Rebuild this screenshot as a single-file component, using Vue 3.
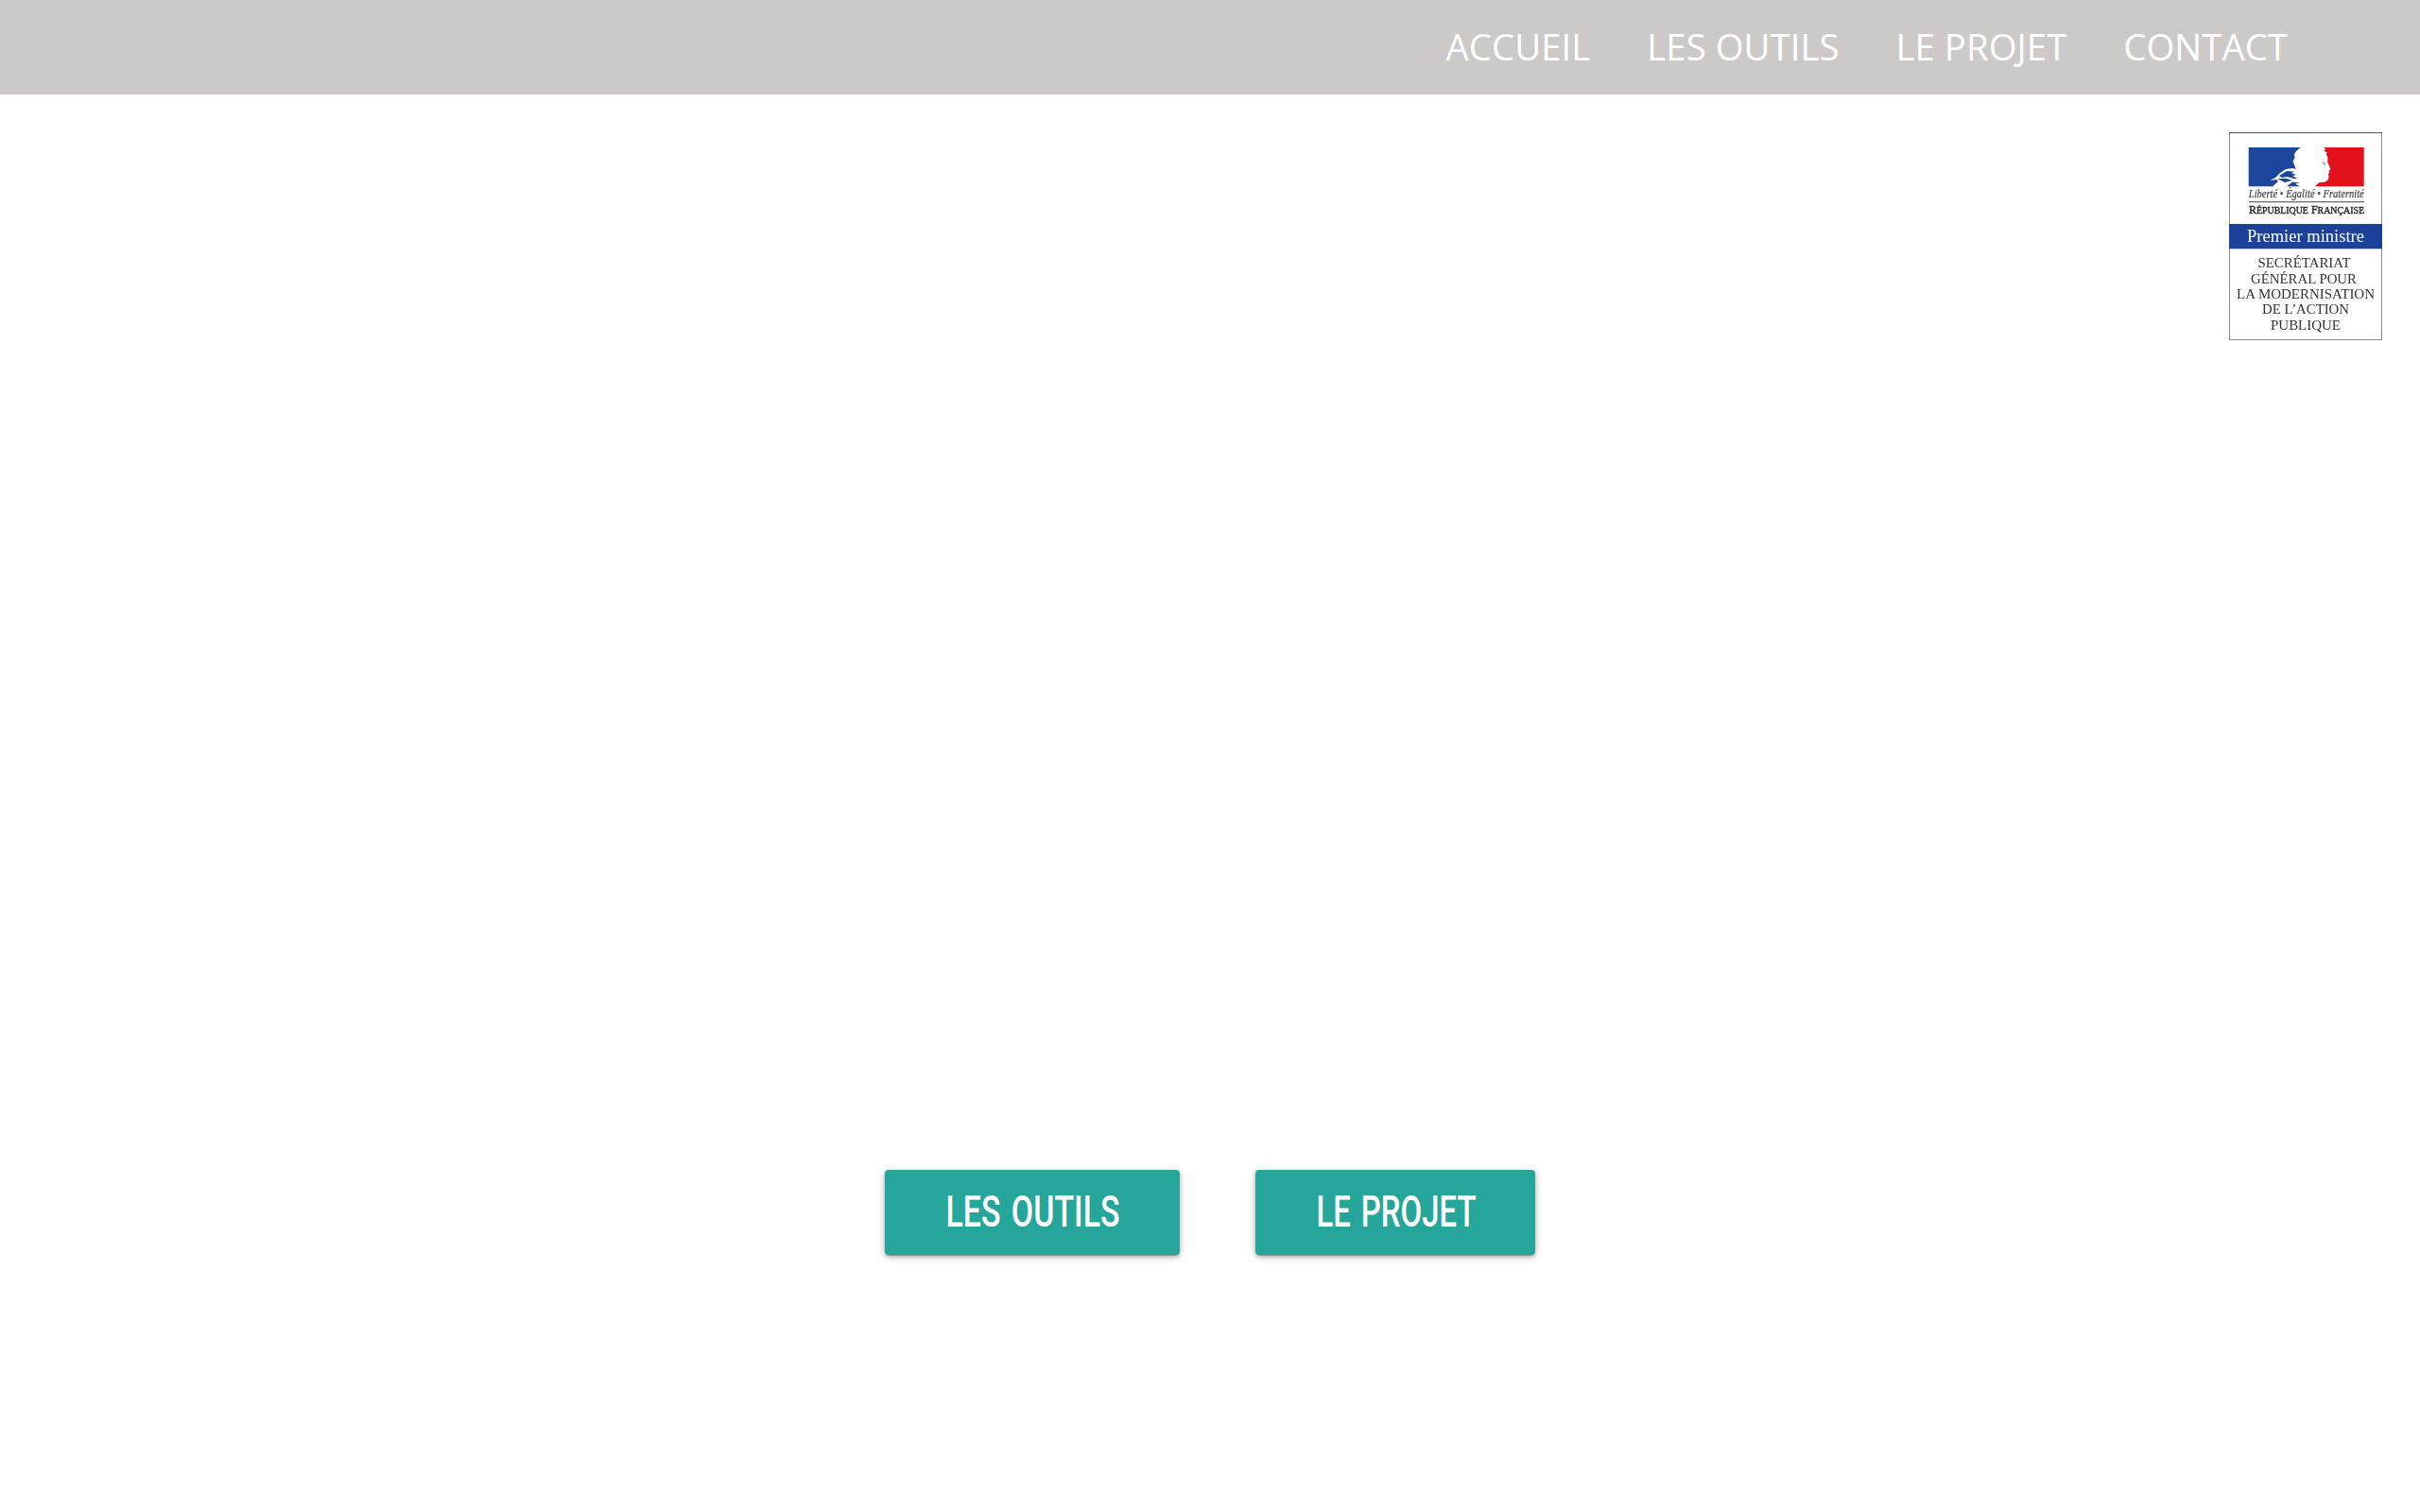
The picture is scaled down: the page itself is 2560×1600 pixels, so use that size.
<script setup>
const links = ['ACCUEIL', 'LES OUTILS', 'LE PROJET', 'CONTACT']

const buttons = [
  { text: 'LES OUTILS', width: 312, length: 184 },
  { text: 'LE PROJET', width: 296, length: 169 }
]

const department = [
  { text: 'SECRÉTARIAT', x: 79.5, y: 143.3, length: 98 },
  { text: 'GÉNÉRAL POUR', x: 79, y: 159.6, length: 112 },
  { text: 'LA MODERNISATION', x: 81, y: 175.8, length: 146 },
  { text: 'DE L’ACTION', x: 81, y: 192, length: 92 },
  { text: 'PUBLIQUE', x: 81, y: 209, length: 74 }
]
</script>

<template>
  <div class="page">
    <nav class="bar">
      <a v-for="link in links" :key="link" class="link">{{ link }}</a>
    </nav>
    <header class="brand">
      <svg class="logo" width="162" height="220" viewBox="0 0 162 220">
        <rect x="0.5" y="0.5" width="161" height="219" fill="#fff" stroke="#8b8b8b" />
        <path d="M0 .5H162" stroke="#555" />
        <g class="soft">
          <path fill="#1b469b" d="M20.7 16H75.5L71 20 69 23 69.5 27 67.5 31 69 34 70.5 39 67 38 60 39 54 43 49 48 43 51 50 50 52 52 46 57.3H20.7Z" />
          <path fill="#1b469b" d="M53 46 61 41 69 41.5 66 43 71 45 67 46 72 49 68 49 62 47 56 48ZM51 49 61 49 67 51 59 53ZM61 57.3 67 52.5 75 53.5 70 54.5 75 57.3Z" />
          <path fill="#e2111b" d="M100.5 16H142.7V57.3H91L95 53.3 102 52.5 105 50 105.5 46.5 104.8 44.5 106 42.5 105.5 41 107.5 39 104.2 31.5 104.5 27 102.8 23 103.5 21 100.5 20 102 18Z" />
          <path d="M98.5 33Q101 31.5 102 33M100 35.5 102 33.5" stroke="#777" stroke-width="1" fill="none" />
          <text class="motto" x="20.8" y="69.2" textLength="122" lengthAdjust="spacingAndGlyphs">Liberté • Égalité • Fraternité</text>
          <path d="M21 73.7H143" stroke="#666" stroke-width="1.2" />
          <text class="republic" x="21" y="86.3" textLength="122" lengthAdjust="spacingAndGlyphs">R<tspan class="small">ÉPUBLIQUE</tspan> F<tspan class="small">RANÇAISE</tspan></text>
        </g>
        <rect y="97" width="162" height="26.3" fill="#1b4298" />
        <g class="soft">
          <text class="minister" x="81" y="116.3" textLength="124" lengthAdjust="spacingAndGlyphs">Premier ministre</text>
          <text v-for="line in department" :key="line.text" class="department" :x="line.x" :y="line.y" :textLength="line.length" lengthAdjust="spacingAndGlyphs">{{ line.text }}</text>
        </g>
      </svg>
    </header>
    <main class="actions">
      <a v-for="button in buttons" :key="button.text" class="button">
        <svg :width="button.width" height="90">
          <text class="label" x="64.5" y="60" :textLength="button.length" lengthAdjust="spacingAndGlyphs">{{ button.text }}</text>
        </svg>
      </a>
    </main>
  </div>
</template>

<style>
body {
  margin: 0;
  background: #fefefe;
}
</style>

<style scoped>
.page {
  height: 1600px;
  display: flex;
  flex-direction: column;
  overflow: hidden;
  font-family: "Open Sans", sans-serif;
}
.bar {
  box-sizing: border-box;
  height: 100px;
  flex: none;
  display: flex;
  justify-content: flex-end;
  align-items: center;
  padding-right: 110px;
  background: #cdc9c8;
}
.link {
  padding: 0 30px;
  color: #fff;
  font-size: 38.4px;
  line-height: 98px;
  height: 100px;
  white-space: nowrap;
}
.brand {
  flex: none;
  display: flex;
  justify-content: flex-end;
  padding: 40px 40px 0 0;
}
.logo {
  display: block;
  font-family: "Liberation Serif", serif;
}
.soft {
  filter: blur(0.4px);
}
.motto {
  font-size: 11.5px;
  font-style: italic;
  fill: #444;
  stroke: #444;
  stroke-width: 0.2px;
}
.republic {
  font-size: 11.5px;
  fill: #222;
  stroke: #222;
  stroke-width: 0.35px;
}
.small {
  font-size: 9.5px;
}
.minister {
  font-size: 19px;
  fill: #fff;
  text-anchor: middle;
}
.department {
  font-size: 15.5px;
  fill: #333;
  text-anchor: middle;
}
.actions {
  display: flex;
  justify-content: center;
  gap: 80px;
  margin-top: 878px;
}
.button {
  height: 90px;
  border-radius: 4px;
  background: #26a69a;
  box-shadow: 0 2px 5px 0 rgba(0, 0, 0, 0.26), 0 2px 8px 0 rgba(0, 0, 0, 0.12), 0 3px 1px -2px rgba(0, 0, 0, 0.2);
}
.button svg {
  display: block;
  overflow: visible;
}
.label {
  font-family: Roboto, sans-serif;
  font-size: 47px;
  font-weight: 500;
  word-spacing: 4px;
  fill: #fff;
}
</style>
